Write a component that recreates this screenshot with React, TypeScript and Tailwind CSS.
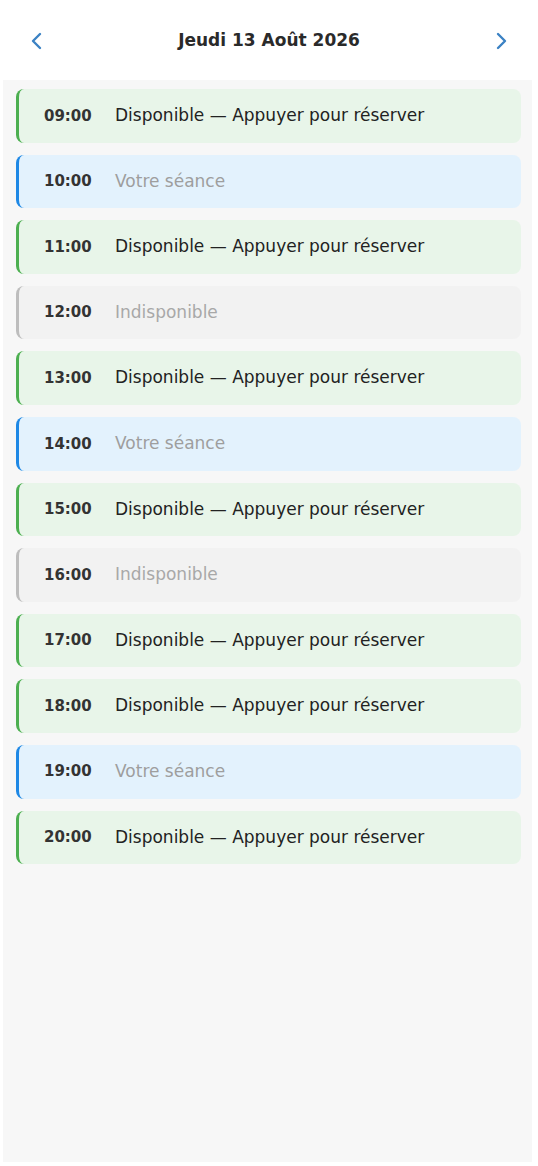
import React from 'react';

type SlotKind = 'free' | 'mine' | 'off';

const SLOTS: { time: string; kind: SlotKind }[] = [
  { time: '09:00', kind: 'free' },
  { time: '10:00', kind: 'mine' },
  { time: '11:00', kind: 'free' },
  { time: '12:00', kind: 'off' },
  { time: '13:00', kind: 'free' },
  { time: '14:00', kind: 'mine' },
  { time: '15:00', kind: 'free' },
  { time: '16:00', kind: 'off' },
  { time: '17:00', kind: 'free' },
  { time: '18:00', kind: 'free' },
  { time: '19:00', kind: 'mine' },
  { time: '20:00', kind: 'free' },
];

const styles: Record<SlotKind, { row: string; label: string; text: string }> = {
  free: { row: 'bg-[#e8f5e9] border-[#4caf50]', label: 'text-[#222222]', text: 'Disponible — Appuyer pour réserver' },
  mine: { row: 'bg-[#e3f2fd] border-[#1e88e5]', label: 'text-[#9e9e9e]', text: 'Votre séance' },
  off: { row: 'bg-[#f2f2f2] border-[#bdbdbd]', label: 'text-[#a8a8a8]', text: 'Indisponible' },
};

const Chevron = ({ dir }: { dir: 'left' | 'right' }) => (
  <svg width="14" height="22" viewBox="0 0 14 22" fill="none">
    <path
      d={dir === 'left' ? 'M11 4 L4 11 L11 18' : 'M3 4 L10 11 L3 18'}
      stroke="#3b82c4"
      strokeWidth="2.4"
      strokeLinecap="round"
      strokeLinejoin="round"
    />
  </svg>
);

export default function App() {
  return (
    <div className="h-[1166px] bg-white flex flex-col font-['DejaVu_Sans',Verdana,sans-serif]">
      <header className="h-[80px] flex items-center justify-between px-[25px] pt-[2px] shrink-0">
        <button className="p-1"><Chevron dir="left" /></button>
        <h1 className="text-[17px] font-bold text-[#2a2a2a]">Jeudi 13 Août 2026</h1>
        <button className="p-1"><Chevron dir="right" /></button>
      </header>

      <div className="flex-1 ml-[3px] mr-[6px] mb-[4px] bg-[#f7f7f7] pt-[9px] pl-[13px] pr-[11px] flex flex-col gap-[12px]">
        {SLOTS.map((s) => {
          const st = styles[s.kind];
          return (
            <div key={s.time} className={`h-[53.6px] rounded-lg border-l-[3px] flex items-center pl-[25px] ${st.row}`}>
              <span className="w-[71px] text-[15px] font-bold text-[#333333]">{s.time}</span>
              <span className={`text-[17px] ${st.label}`}>{st.text}</span>
            </div>
          );
        })}
      </div>
    </div>
  );
}
